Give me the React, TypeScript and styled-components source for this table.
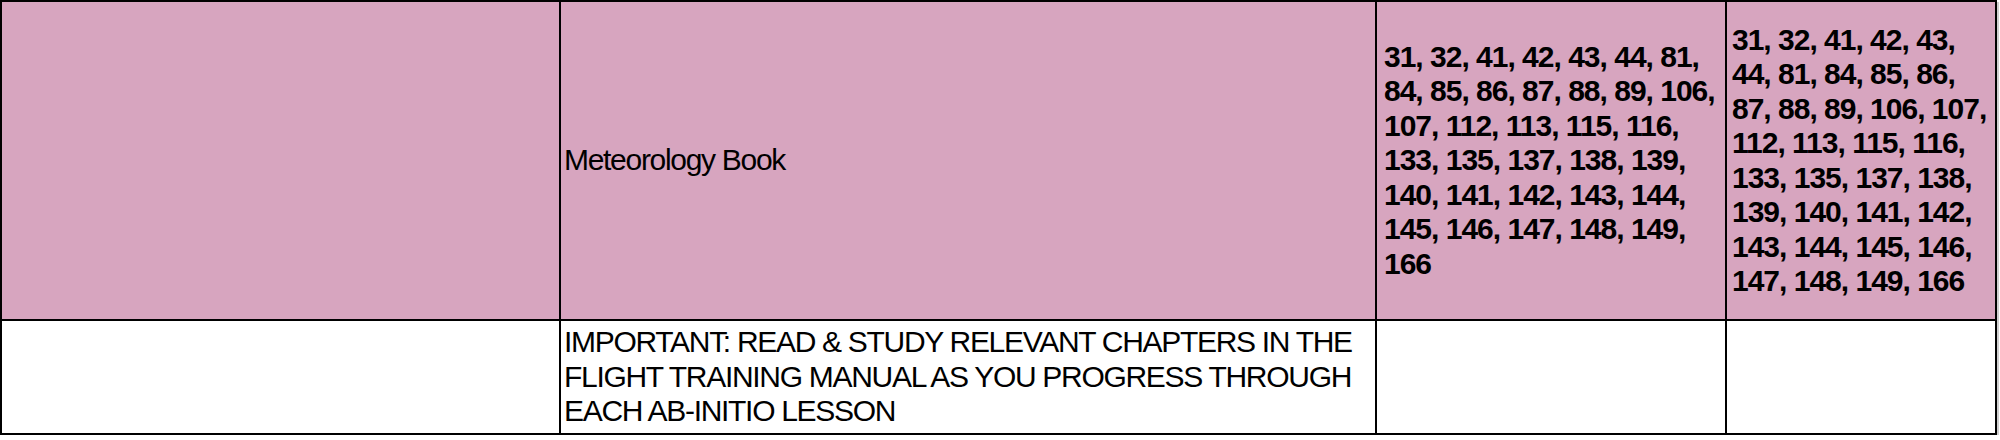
import React from "react";
import styled, { createGlobalStyle } from "styled-components";

const GlobalStyle = createGlobalStyle`
  html, body {
    margin: 0;
    padding: 0;
    background: #ffffff;
  }
`;

type Tone = "pink" | "white";

interface CellProps {
  $tone: Tone;
  $bold?: boolean;
  $padLeft?: number;
  $padRight?: number;
}

const rows: { tone: Tone; cells: { text: string; bold?: boolean }[] }[] = [
  {
    tone: "pink",
    cells: [
      { text: "" },
      { text: "Meteorology Book" },
      {
        text: "31, 32, 41, 42, 43, 44, 81, 84, 85, 86, 87, 88, 89, 106, 107, 112, 113, 115, 116, 133, 135, 137, 138, 139, 140, 141, 142, 143, 144, 145, 146, 147, 148, 149, 166",
        bold: true,
      },
      {
        text: "31, 32, 41, 42, 43, 44, 81, 84, 85, 86, 87, 88, 89, 106, 107, 112, 113, 115, 116, 133, 135, 137, 138, 139, 140, 141, 142, 143, 144, 145, 146, 147, 148, 149, 166",
        bold: true,
      },
    ],
  },
  {
    tone: "white",
    cells: [
      { text: "" },
      {
        text: "IMPORTANT: READ & STUDY RELEVANT CHAPTERS IN THE FLIGHT TRAINING MANUAL AS YOU PROGRESS THROUGH EACH AB-INITIO LESSON",
      },
      { text: "" },
      { text: "" },
    ],
  },
];

const padding = [
  { left: 3, right: 3 },
  { left: 3, right: 4 },
  { left: 7, right: 0 },
  { left: 5, right: 2 },
];

const App: React.FC = () => {
  return (
    <>
      <GlobalStyle />
      <Sheet>
        {rows.map((row, r) =>
          row.cells.map((cell, c) => (
            <Cell
              key={`${r}-${c}`}
              $tone={row.tone}
              $bold={cell.bold}
              $padLeft={padding[c].left}
              $padRight={padding[c].right}
            >
              {cell.text && <CellText $bold={cell.bold}>{cell.text}</CellText>}
            </Cell>
          ))
        )}
      </Sheet>
    </>
  );
};

export default App;

const Sheet = styled.div`
  display: grid;
  grid-template-columns: 559px 816px 350px 270px;
  grid-template-rows: 319px 114px;
  width: 1995px;
  border-top: 2px solid #000;
  border-left: 2px solid #000;
  box-shadow: 2px 2px 0 #cfcfcf;
  font-family: "Liberation Sans", Arial, sans-serif;
  color: #000;
`;

const Cell = styled.div<CellProps>`
  display: flex;
  align-items: center;
  box-sizing: border-box;
  border-right: 2px solid #000;
  border-bottom: 2px solid #000;
  background-color: ${({ $tone }) => ($tone === "pink" ? "#d7a5bf" : "#ffffff")};
  padding-left: ${({ $padLeft }) => $padLeft ?? 4}px;
  padding-right: ${({ $padRight }) => $padRight ?? 4}px;
  overflow: hidden;
`;

const CellText = styled.div<{ $bold?: boolean }>`
  font-size: 30px;
  line-height: 34.5px;
  font-weight: ${({ $bold }) => ($bold ? 700 : 400)};
  letter-spacing: ${({ $bold }) => ($bold ? "-1px" : "-1.3px")};
  white-space: normal;
`;
